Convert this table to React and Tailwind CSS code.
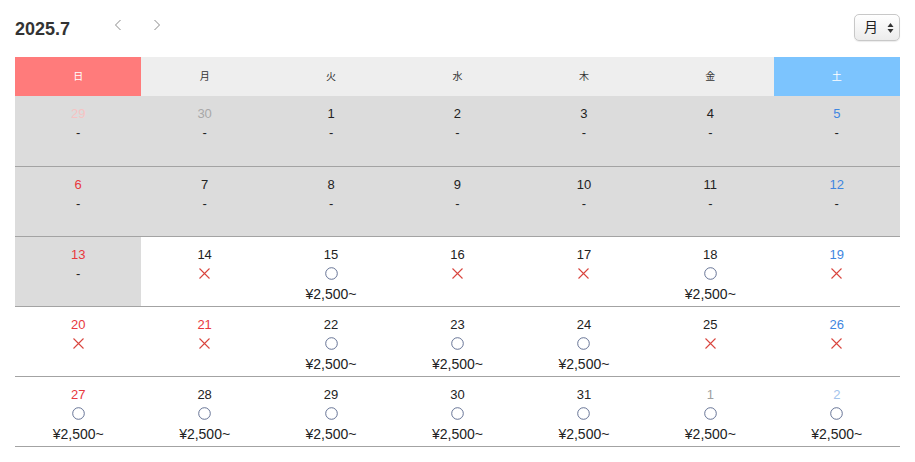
import React from 'react';

const HEAD = ['日', '月', '火', '水', '木', '金', '土'];

// kind: 'dash' | 'x' | 'o'; tone: text colour of the date
const WEEKS = [
  [
    { d: 29, tone: 'text-[#f6c3c3]', kind: 'dash', off: true },
    { d: 30, tone: 'text-[#a8a8a8]', kind: 'dash', off: true },
    { d: 1, kind: 'dash', off: true },
    { d: 2, kind: 'dash', off: true },
    { d: 3, kind: 'dash', off: true },
    { d: 4, kind: 'dash', off: true },
    { d: 5, tone: 'text-[#3f86e0]', kind: 'dash', off: true },
  ],
  [
    { d: 6, tone: 'text-[#e8383d]', kind: 'dash', off: true },
    { d: 7, kind: 'dash', off: true },
    { d: 8, kind: 'dash', off: true },
    { d: 9, kind: 'dash', off: true },
    { d: 10, kind: 'dash', off: true },
    { d: 11, kind: 'dash', off: true },
    { d: 12, tone: 'text-[#3f86e0]', kind: 'dash', off: true },
  ],
  [
    { d: 13, tone: 'text-[#e8383d]', kind: 'dash', off: true },
    { d: 14, kind: 'x' },
    { d: 15, kind: 'o' },
    { d: 16, kind: 'x' },
    { d: 17, kind: 'x' },
    { d: 18, kind: 'o' },
    { d: 19, tone: 'text-[#3f86e0]', kind: 'x' },
  ],
  [
    { d: 20, tone: 'text-[#e8383d]', kind: 'x' },
    { d: 21, tone: 'text-[#e8383d]', kind: 'x' },
    { d: 22, kind: 'o' },
    { d: 23, kind: 'o' },
    { d: 24, kind: 'o' },
    { d: 25, kind: 'x' },
    { d: 26, tone: 'text-[#3f86e0]', kind: 'x' },
  ],
  [
    { d: 27, tone: 'text-[#e8383d]', kind: 'o' },
    { d: 28, kind: 'o' },
    { d: 29, kind: 'o' },
    { d: 30, kind: 'o' },
    { d: 31, kind: 'o' },
    { d: 1, tone: 'text-[#a0a0a0]', kind: 'o' },
    { d: 2, tone: 'text-[#a3c4ec]', kind: 'o' },
  ],
];

const Cross = () => (
  <svg width="11" height="11" viewBox="0 0 11 11" className="block">
    <path d="M0.5 0.5L10.5 10.5M10.5 0.5L0.5 10.5" stroke="#d9453e" strokeWidth="1.1" fill="none" />
  </svg>
);

const Circle = () => (
  <svg width="13" height="13" viewBox="0 0 13 13" className="block">
    <circle cx="6.5" cy="6.5" r="5.8" stroke="#56648a" strokeWidth="0.9" fill="none" />
  </svg>
);

const Cell = ({ cell }) => (
  <td className={`h-[70px] border-b border-[#a3a3a3] align-top p-0 ${cell.off ? 'bg-[#dcdcdc]' : 'bg-white'}`}>
    <div className="flex flex-col items-center pt-[8px] text-[13px] leading-[20px] text-[#222]">
      <span className={cell.tone || 'text-[#222]'}>{cell.d}</span>
      {cell.kind === 'dash' && <span className="leading-[18px]">-</span>}
      {cell.kind !== 'dash' && (
        <span className="h-[18px] flex items-center justify-center">
          {cell.kind === 'x' ? <Cross /> : <Circle />}
        </span>
      )}
      {cell.kind === 'o' && <span className="leading-[22px] text-[14px]">¥2,500~</span>}
    </div>
  </td>
);

const App = () => {
  return (
    <div className="w-[915px] h-[462px] bg-white px-[15px] pt-[14px] font-['Liberation_Sans','Noto_Sans_CJK_JP',sans-serif] overflow-hidden">
      <div className="flex items-center h-[27px] mb-[16px]">
        <h1 className="text-[18px] font-bold text-[#333] w-[99px] mt-[3px]">2025.7</h1>
        <div className="flex items-center gap-[31px] mb-[5px]">
          <svg width="8" height="12" viewBox="0 0 8 12">
            <path d="M6.5 1L1.5 6L6.5 11" stroke="#8a8a8a" strokeWidth="1" fill="none" />
          </svg>
          <svg width="8" height="12" viewBox="0 0 8 12">
            <path d="M1.5 1L6.5 6L1.5 11" stroke="#8a8a8a" strokeWidth="1" fill="none" />
          </svg>
        </div>
        <div className="ml-auto flex items-center gap-[9px] h-[27px] w-[46px] pl-[9px] rounded-[5px] border border-[#c8c8c8] bg-gradient-to-b from-white to-[#ececec] shadow-[0_1px_1px_rgba(0,0,0,0.08)] text-[14px] text-[#222]">
          <span>月</span>
          <svg width="7" height="12" viewBox="0 0 7 12">
            <path d="M3.5 1L6.5 5H0.5Z M3.5 11L0.5 7H6.5Z" fill="#333" />
          </svg>
        </div>
      </div>
      <table className="w-[885px] table-fixed border-collapse">
        <thead>
          <tr>
            {HEAD.map((h, i) => (
              <th
                key={h}
                className={`h-[39px] p-0 text-[10px] font-normal ${
                  i === 0 ? 'bg-[#ff7b7b] text-white' : i === 6 ? 'bg-[#7cc4fe] text-white' : 'bg-[#eeeeee] text-[#333]'
                }`}
              >
                {h}
              </th>
            ))}
          </tr>
        </thead>
        <tbody>
          {WEEKS.map((week, wi) => (
            <tr key={wi}>
              {week.map((cell, ci) => (
                <Cell key={ci} cell={cell} />
              ))}
            </tr>
          ))}
        </tbody>
      </table>
    </div>
  );
};

export default App;
